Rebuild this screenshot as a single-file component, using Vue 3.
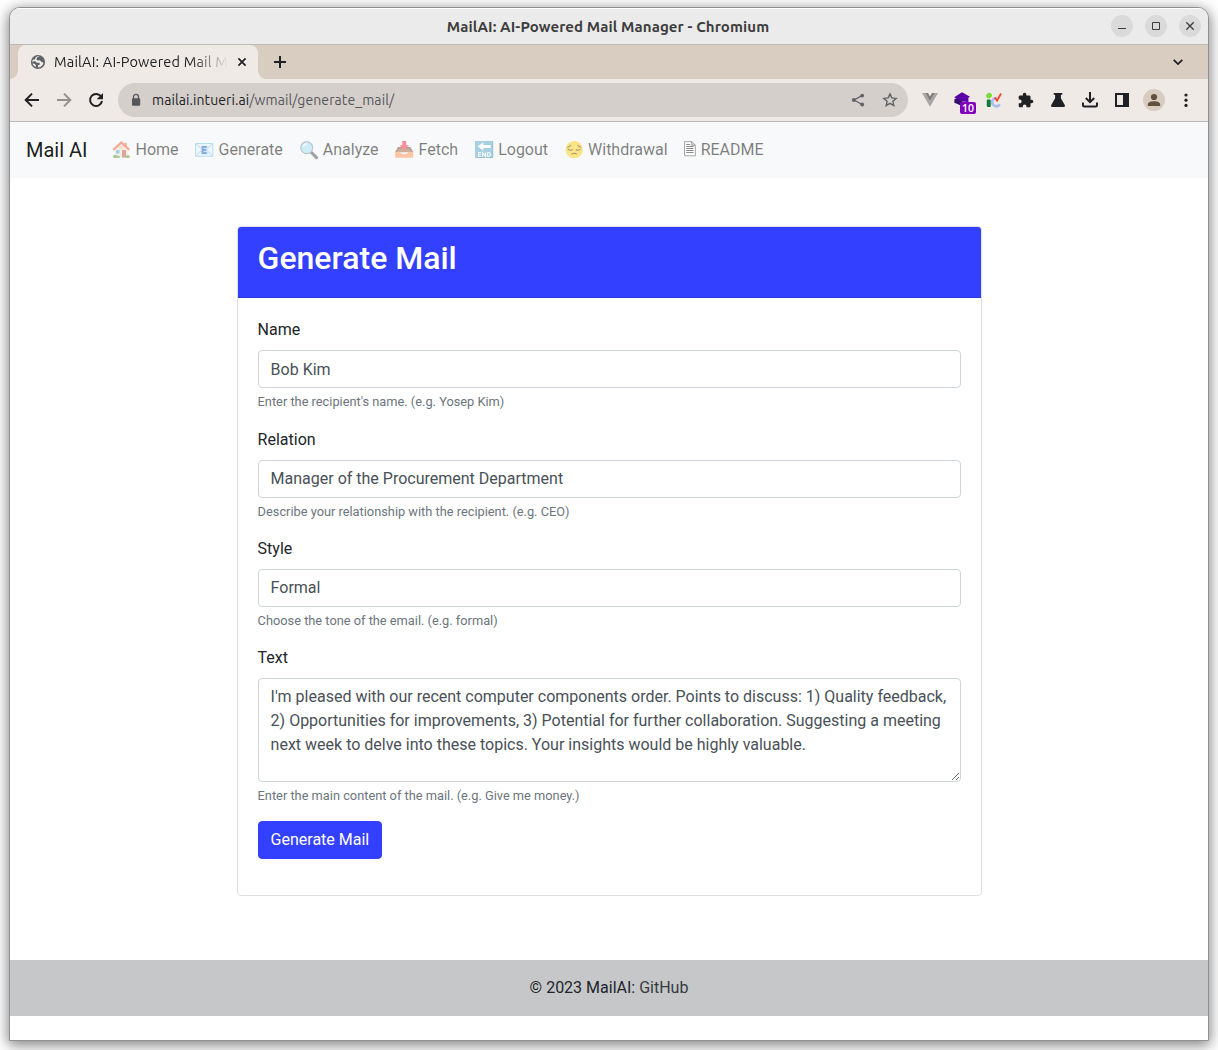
<script setup>
import { ref } from 'vue'

const links = [
  { icon: 'home', label: 'Home' },
  { icon: 'mail', label: 'Generate' },
  { icon: 'search', label: 'Analyze' },
  { icon: 'inbox', label: 'Fetch' },
  { icon: 'end', label: 'Logout' },
  { icon: 'pensive', label: 'Withdrawal' },
  { icon: 'page', label: 'README' },
]

const fields = ref([
  { id: 'name', label: 'Name', value: 'Bob Kim', help: "Enter the recipient's name. (e.g. Yosep Kim)" },
  { id: 'relation', label: 'Relation', value: 'Manager of the Procurement Department', help: 'Describe your relationship with the recipient. (e.g. CEO)' },
  { id: 'style', label: 'Style', value: 'Formal', help: 'Choose the tone of the email. (e.g. formal)' },
])

const body = ref(
  "I'm pleased with our recent computer components order. Points to discuss: 1) Quality feedback, 2) Opportunities for improvements, 3) Potential for further collaboration. Suggesting a meeting next week to delve into these topics. Your insights would be highly valuable."
)
</script>

<template>
  <div class="desktop">
    <div class="window">
      <header class="titlebar">
        <span class="title">MailAI: AI-Powered Mail Manager - Chromium</span>
        <div class="controls">
          <span class="ctl"><svg width="22" height="22" viewBox="0 0 22 22"><path d="M7 13.5h8" stroke="#3d3d3d" /></svg></span>
          <span class="ctl"><svg width="22" height="22" viewBox="0 0 22 22"><path d="M7.5 7.5h7v7h-7z" fill="none" stroke="#3d3d3d" /></svg></span>
          <span class="ctl"><svg width="22" height="22" viewBox="0 0 22 22"><path d="M7.3 7.3l7.4 7.4M14.7 7.3l-7.4 7.4" stroke="#3d3d3d" stroke-width="1.3" /></svg></span>
        </div>
      </header>

      <div class="tabs">
        <div class="tab">
          <svg class="globe" width="16" height="16" viewBox="0 0 16 16">
            <circle cx="8" cy="8" r="7.1" fill="#5f6368" />
            <path d="M9.6 2.4L7 3.6 6.4 5.2 7.6 6.4 10 6.2 11.2 7.8 13.4 8.4Q13.2 11.6 10.4 13L8 13.6V11.6L10 10.2 9.4 8.8H6.8L5.4 7.2 2.6 7.4 2.5 9.4 5 10 6 11.6 5.6 13Q2.4 11.3 2.2 8 2.3 6.6 2.9 5.4L5 5.6 5.4 3.6 7.6 2.2Z" fill="#f0eae6" />
          </svg>
          <span class="tab-title">MailAI: AI-Powered Mail M</span>
          <svg class="tab-close" width="10" height="10" viewBox="0 0 10 10"><path d="M1.4 1.4l7.2 7.2M8.6 1.4L1.4 8.6" stroke="#202124" stroke-width="1.7" /></svg>
        </div>
        <svg class="plus" width="14" height="14" viewBox="0 0 14 14"><path d="M7 1v12M1 7h12" stroke="#202124" stroke-width="2" /></svg>
        <svg class="chevron" width="12" height="10" viewBox="0 0 12 10"><path d="M1.7 2.8L6 7.1l4.3-4.3" fill="none" stroke="#202124" stroke-width="1.8" /></svg>
      </div>

      <div class="toolbar">
        <svg class="tool" viewBox="0 0 16 16"><path d="M15 8H2M8 1.6L1.7 8 8 14.4" fill="none" stroke="#202124" stroke-width="2" /></svg>
        <svg class="tool" viewBox="0 0 16 16"><path d="M1 8h13M8 1.6L14.3 8 8 14.4" fill="none" stroke="#93908e" stroke-width="2" /></svg>
        <svg class="tool" viewBox="0 0 16 16"><path d="M13.2 4.8A6 6 0 1 0 14 9" fill="none" stroke="#202124" stroke-width="2" /><path d="M15 1v6.3H8.7z" fill="#202124" /></svg>
        <div class="address">
          <svg class="lock" width="10" height="14" viewBox="0 0 10 14"><path d="M2.5 6V3.8a2.5 2.5 0 0 1 5 0V6" fill="none" stroke="#55575b" stroke-width="1.3" /><rect x="1" y="5.3" width="8.2" height="7.4" rx="1" fill="#55575b" /></svg>
          <span class="url"><b>mailai.intueri.ai</b><i>/wmail/generate_mail/</i></span>
          <svg class="share" width="14" height="14" viewBox="0 0 14 14"><path d="M11 2.6L3 7l8 4.5" fill="none" stroke="#5f6368" stroke-width="1.3" /><circle cx="11.2" cy="2.6" r="1.9" fill="#5f6368" /><circle cx="2.8" cy="7" r="1.9" fill="#5f6368" /><circle cx="11.2" cy="11.5" r="1.9" fill="#5f6368" /></svg>
          <svg class="star" width="16" height="16" viewBox="0 0 16 16"><path d="M8 1.9l1.8 4 4.4.5-3.3 2.9.9 4.3L8 11.4l-3.8 2.2.9-4.3-3.3-2.9 4.4-.5z" fill="none" stroke="#5f6368" stroke-width="1.4" /></svg>
        </div>
        <div class="extensions">
          <svg class="tool" viewBox="0 0 16 16"><path d="M0 1h3.2L8 9.3 12.8 1H16L8 14.8z" fill="#a9a6a4" /><path d="M3.2 1H6l2 3.5L10 1h2.8L8 9.3z" fill="#7f7d7c" /></svg>
          <span class="tool cube">
            <svg width="16" height="16" viewBox="0 0 16 16"><path d="M8 .2l8 4.6-1.6 1V10L8 9.4 .2 5.2z" fill="#5a00a6" /><path d="M.4 7.6Q.6 6.6 2.6 6.3L8 9v5L.4 10.8z" fill="#37106f" /></svg>
            <span class="badge">10</span>
          </span>
          <svg class="tool" viewBox="0 0 16 16"><ellipse cx="3" cy="3.6" rx="3" ry="2.6" fill="#7bdc35" transform="rotate(-35 3 3.6)" /><rect x=".8" y="7.5" width="4" height="7.5" rx="1" fill="#13783b" /><path d="M13.8 12.3a4.1 4.1 0 1 1-2.6-6.2" fill="none" stroke="#a9bdf2" stroke-width="2.6" /><path d="M8.7 5.6l2.4 2.9 4-7" fill="none" stroke="#f1492e" stroke-width="1.9" /></svg>
          <svg class="tool" viewBox="1 0 23 23"><path d="M20.5 11H19V7c0-1.1-.9-2-2-2h-4V3.5C13 2.12 11.88 1 10.5 1S8 2.12 8 3.5V5H4c-1.1 0-1.99.9-1.99 2v3.8H3.5c1.49 0 2.7 1.21 2.7 2.7s-1.21 2.7-2.7 2.7H2V20c0 1.1.9 2 2 2h3.8v-1.5c0-1.49 1.21-2.7 2.7-2.7 1.49 0 2.7 1.21 2.7 2.7V22H17c1.1 0 2-.9 2-2v-4h1.5c1.38 0 2.5-1.12 2.5-2.5S21.88 11 20.5 11z" fill="#202124" /></svg>
          <svg class="tool" viewBox="0 0 16 16"><path d="M3.7 1h8.6v1.8h-1.4v3.5l4 7q.5 1.7-1 1.7H2.1q-1.5 0-1-1.7l4-7V2.8H3.7z" fill="#202124" /></svg>
          <svg class="tool" viewBox="0 0 16 16"><path d="M8 0v9.5M3.8 6L8 10.2 12.2 6M1 10.5v2.8q0 1.2 1.2 1.2h11.6q1.2 0 1.2-1.2v-2.8" fill="none" stroke="#202124" stroke-width="2" /></svg>
          <svg class="tool" viewBox="0 0 16 16"><path d="M1 1h14v14H1zM3 3v10h6V3z" fill="#202124" fill-rule="evenodd" /></svg>
          <svg class="avatar" width="22" height="22" viewBox="0 0 22 22"><circle cx="11" cy="11" r="11" fill="#d8ccc0" /><circle cx="11" cy="8" r="3.1" fill="#62503f" /><path d="M4.8 17v-1.6C5 12.9 9 12.3 11 12.3s6 .6 6.2 3.1V17z" fill="#62503f" /></svg>
          <svg class="dots" width="4" height="16" viewBox="0 0 4 16"><circle cx="2" cy="3" r="1.6" fill="#202124" /><circle cx="2" cy="8.2" r="1.6" fill="#202124" /><circle cx="2" cy="13.4" r="1.6" fill="#202124" /></svg>
        </div>
      </div>

      <main class="page">
        <nav class="navbar">
          <a class="brand">Mail AI</a>
          <a v-for="l in links" :key="l.icon" class="link">
            <svg v-if="l.icon === 'home'" class="emoji" viewBox="0 0 20 20">
              <path d="M13.4 3h2.2v5h-2.2z" fill="#d85a35" /><path d="M3.6 9.5L10.3 3.6 17 9.5v8H3.6z" fill="#f5e3cf" />
              <path d="M10.3 1L19 9l-1.2 1.7-7.5-6.6-7.5 6.6L1.6 9z" fill="#f0582e" />
              <path d="M5 10.2h3.4v3.2H5z" fill="#3aa4d8" /><path d="M11 10h4v7.5h-4z" fill="#b5583c" /><path d="M8.5 6.2h3.2v2.3H8.5z" fill="#f5b887" />
              <path d="M2.2 15.5q2-1.6 4 0l2.6.5v2H2.2zM15 15.4q2.2-1 3.8.5v2H15z" fill="#60a13a" />
            </svg>
            <svg v-else-if="l.icon === 'mail'" class="emoji" viewBox="0 0 20 20">
              <path d="M1.6 3.5h17.2v12.8H1.6z" fill="#e6f5fd" stroke="#72c4ee" /><path d="M1.8 3.8l8.4 7.4 8.4-7.4M1.8 16l6-6M18.6 16l-6-6" fill="none" stroke="#72c4ee" />
              <path d="M6.8 5.8h7.4v8.8H6.8z" fill="#a9dcfa" /><path d="M12.7 7H8.6v6h4.1M8.6 10h3.7" fill="none" stroke="#1563bd" stroke-width="1.9" />
            </svg>
            <svg v-else-if="l.icon === 'search'" class="emoji" viewBox="0 0 20 20">
              <path d="M11.7 11.8l5.8 5.8" stroke="#4b4b4b" stroke-width="3" stroke-linecap="round" /><circle cx="7.7" cy="7.7" r="6" fill="#a8e0fb" stroke="#82949e" stroke-width="1.2" /><path d="M4.2 6.5q1-2.5 3.7-2.6" fill="none" stroke="#fff" stroke-width="1.3" />
            </svg>
            <svg v-else-if="l.icon === 'inbox'" class="emoji inbox" viewBox="0 0 20 20">
              <path d="M4 7h12.4l2.8 5H1.2z" fill="#70452f" /><path d="M5 8.5h10.4l1.8 3.7H3.2z" fill="#a5623d" />
              <path d="M1.2 11.8h4.7q.8 2.4 4.3 2.4t4.3-2.4h4.7v6H1.2z" fill="#ff9255" /><path d="M8.3 1h3.9v4.2h2.7l-4.7 5-4.6-5h2.7z" fill="#ff2438" />
            </svg>
            <svg v-else-if="l.icon === 'end'" class="emoji" viewBox="0 0 20 20">
              <rect x="1.2" y="1" width="18" height="17" rx=".8" fill="#327f9f" /><rect x="1.2" y="1" width="17.2" height="16.2" rx=".8" fill="#5ba9c7" />
              <path d="M9.4 2.2v2.7h7.4v3H9.4v2.6L3.5 6.4z" fill="#fff" /><path d="M7 12.5H4.5v4H7M4.5 14.5h2.2M8.6 16.8v-4.2l3 4v-4.2M13.7 12.6v3.9q2.7.3 2.7-2t-2.7-1.9" fill="none" stroke="#fff" stroke-width="1.1" />
            </svg>
            <svg v-else-if="l.icon === 'pensive'" class="emoji" viewBox="0 0 20 20">
              <circle cx="10.2" cy="9.6" r="8.7" fill="#fcd010" /><path d="M3.6 7.2q2.1-.2 3-2M16.8 7.2q-2.1-.2-3-2M4.3 9.4q2 1.6 4 .4M16.1 9.4q-2 1.6-4 .4M8 14q2.2-1.4 4.4 0" fill="none" stroke="#5b3500" stroke-width="1.1" stroke-linecap="round" />
            </svg>
            <svg v-else class="emoji narrow" viewBox="0 0 13 20">
              <path d="M1.5 1.6h7.3l3.6 3.6v10.6H1.5z" fill="#fff" stroke="#444" stroke-width=".9" /><path d="M8.8 1.6v3.6h3.6" fill="none" stroke="#222" /><path d="M3.2 4.5h4M3.2 6.5h7.3M3.2 8.5h7.3M3.2 10.5h7.3M3.2 12.5h7.3" stroke="#222" />
            </svg>
            <span>{{ l.label }}</span>
          </a>
        </nav>

        <section class="card">
          <div class="card-header"><h2>Generate Mail</h2></div>
          <form class="card-body" @submit.prevent>
            <div v-for="f in fields" :key="f.id" class="group">
              <label :for="f.id">{{ f.label }}</label>
              <input :id="f.id" v-model="f.value" class="control" type="text" />
              <small>{{ f.help }}</small>
            </div>
            <div class="group">
              <label for="text">Text</label>
              <textarea id="text" v-model="body" class="control area" spellcheck="false"></textarea>
              <small>Enter the main content of the mail. (e.g. Give me money.)</small>
            </div>
            <div class="group"><button class="btn" type="submit">Generate Mail</button></div>
          </form>
        </section>

        <footer class="footer">© 2023 MailAI: <a>GitHub</a></footer>
      </main>
    </div>
  </div>
</template>

<style>
html,
body {
  margin: 0;
  background: #fff;
  overflow: hidden;
}
</style>

<style scoped>
* {
  box-sizing: border-box;
}
.desktop {
  height: 1050px;
  padding: 7px 9px 9px;
  overflow: hidden;
  font-family: Roboto, sans-serif;
}
.window {
  display: flex;
  flex-direction: column;
  width: 1200px;
  height: 1034px;
  border: 1px solid #919191;
  border-radius: 11px 11px 0 0;
  overflow: hidden;
  background: #fff;
  box-shadow: 0 3px 14px 1px rgba(0, 0, 0, 0.5);
}
.titlebar {
  display: flex;
  align-items: center;
  justify-content: center;
  position: relative;
  flex: none;
  height: 37px;
  background: #ebebeb;
  border-top: 1px solid #fff;
  border-bottom: 1px solid #bdbbb8;
}
.title {
  margin-right: 2px;
  font: bold 15px/20px Ubuntu, "Noto Sans", sans-serif;
  letter-spacing: 0.1px;
  color: #3d3d3d;
}
.controls {
  position: absolute;
  right: 7px;
  top: 6px;
  display: flex;
  gap: 12px;
}
.ctl {
  width: 22px;
  height: 22px;
  border-radius: 50%;
  background: #dadada;
}
.ctl svg {
  display: block;
}
.tabs {
  display: flex;
  align-items: center;
  flex: none;
  height: 34px;
  background: #d9ccc0;
  padding-left: 8px;
}
.tab {
  display: flex;
  align-items: center;
  width: 240px;
  height: 34px;
  padding: 0 11px 0 12px;
  border-radius: 8px 8px 0 0;
  background: #f0eae6;
  position: relative;
}
.tab::before,
.tab::after {
  content: "";
  position: absolute;
  bottom: 0;
  width: 8px;
  height: 8px;
}
.tab::before {
  left: -8px;
  background: radial-gradient(circle at 0 0, transparent 7.5px, #f0eae6 8px);
}
.tab::after {
  right: -8px;
  background: radial-gradient(circle at 100% 0, transparent 7.5px, #f0eae6 8px);
}
.globe {
  flex: none;
  margin-right: 8px;
}
.tab-title {
  flex: none;
  width: 178px;
  white-space: nowrap;
  font: 14.5px/20px Ubuntu, "Noto Sans", sans-serif;
  letter-spacing: 0.18px;
  color: #202124;
  mask-image: linear-gradient(90deg, #000 138px, transparent 174px);
}
.tab-close {
  margin-left: auto;
}
.plus {
  margin-left: 15px;
}
.chevron {
  margin-left: auto;
  margin-right: 24px;
}
.toolbar {
  display: flex;
  align-items: center;
  flex: none;
  height: 43px;
  padding-left: 14px;
  background: #f0eae6;
  border-bottom: 1px solid #bbb8b4;
}
.tool {
  flex: none;
  width: 16px;
  height: 16px;
}
.toolbar > .tool {
  margin-right: 16px;
}
.address {
  display: flex;
  align-items: center;
  width: 790px;
  height: 34px;
  margin-left: -2px;
  padding: 0 10px 0 13px;
  border-radius: 17px;
  background: #d5cfcc;
}
.url {
  margin-left: 11px;
  font: 14px/20px Ubuntu, "Noto Sans", sans-serif;
  letter-spacing: 0.09px;
  color: #55575b;
}
.url b,
.url i {
  font-weight: 400;
  font-style: normal;
}
.url b {
  color: #202124;
}
.share {
  margin-left: auto;
}
.star {
  margin-left: 17px;
}
.extensions {
  display: flex;
  align-items: center;
  gap: 16px;
  margin-left: 14px;
}
.cube {
  position: relative;
}
.cube svg {
  display: block;
}
.badge {
  position: absolute;
  left: 6px;
  top: 10px;
  width: 16px;
  height: 12px;
  border-radius: 2px;
  background: #7f00bd;
  color: #fff;
  font: 600 10.5px/12px "Open Sans", sans-serif;
  text-align: center;
}
.avatar {
  margin: 0 -3px;
}
.dots {
  margin-left: 6px;
}
.page {
  display: flex;
  flex-direction: column;
  flex: 1;
  font-size: 16px;
  line-height: 24px;
  color: #212529;
}
.navbar {
  display: flex;
  align-items: center;
  height: 56px;
  padding: 8px 16px;
  background: #f8f9fa;
}
.brand {
  margin-right: 16px;
  font-size: 20px;
  line-height: 30px;
  color: rgba(0, 0, 0, 0.9);
}
.link {
  display: flex;
  align-items: center;
  gap: 4px;
  padding: 8px;
  color: rgba(0, 0, 0, 0.5);
}
.emoji {
  width: 20px;
  height: 20px;
  margin: 0 0.2px 0 -0.2px;
  opacity: 0.5;
}
.inbox {
  margin: 0 0.7px 0 -0.7px;
}
.narrow {
  width: 13px;
}
.card {
  width: 745px;
  margin: 48px 0 0 226.6px;
  border: 1px solid #dfdfdf;
  border-radius: 4px;
}
.card-header {
  padding: 12px 20px;
  background: #3440ff;
  border-bottom: 1px solid #2e38e0;
  border-radius: 3px 3px 0 0;
}
h2 {
  margin: 0 0 8px;
  font-size: 32px;
  font-weight: 500;
  line-height: 38.4px;
  color: #fff;
}
.card-body {
  padding: 20px;
}
.group {
  margin-bottom: 16px;
}
label {
  display: block;
  margin-bottom: 8px;
}
.control {
  display: block;
  width: 100%;
  height: 38px;
  margin: 0;
  padding: 6px 12px;
  border: 1px solid #ced4da;
  border-radius: 4px;
  background: #fff;
  font: 16px/24px Roboto, sans-serif;
  color: #495057;
  outline: none;
}
.area {
  height: 104px;
  overflow: auto;
  resize: vertical;
}
small {
  display: block;
  margin-top: 4px;
  font-size: 12.8px;
  line-height: 19.2px;
  color: #6c757d;
}
.btn {
  display: block;
  height: 38px;
  padding: 6px 12px;
  border: 1px solid #3440ff;
  border-radius: 4px;
  background: #3440ff;
  color: #fff;
  font: 16px/24px Roboto, sans-serif;
}
.footer {
  height: 56px;
  margin-top: 64px;
  padding: 16px;
  background: #c6c7c9;
  text-align: center;
}
.footer a {
  color: #343a40;
}
</style>
